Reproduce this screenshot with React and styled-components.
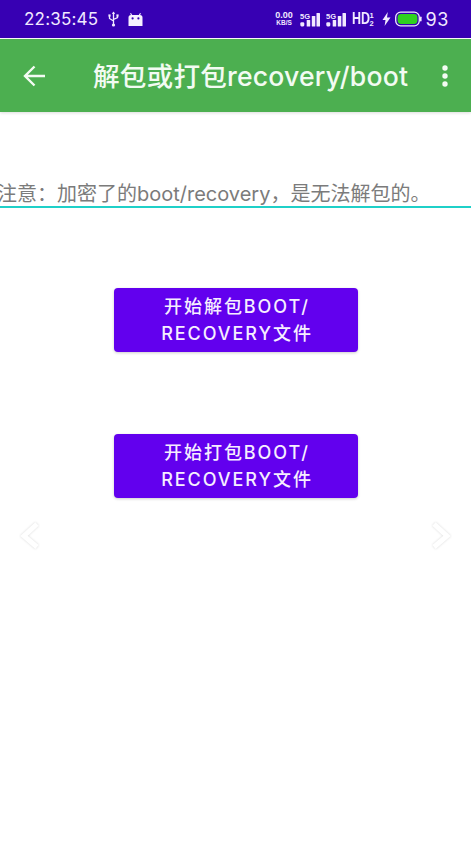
import React from "react";
import styled, { createGlobalStyle } from "styled-components";

const Global = createGlobalStyle`
  html, body { margin: 0; padding: 0; background: #fff; }
  body { font-family: Inter, "Noto Sans CJK SC", sans-serif; overflow: hidden; }
`;

const Page = styled.div`
  width: 471px;
  height: 864px;
  display: flex;
  flex-direction: column;
  overflow: hidden;
  background: #fff;
`;

const StatusBar = styled.div`
  height: 38px;
  flex: none;
  box-sizing: border-box;
  padding: 0 22px 0 24px;
  display: flex;
  align-items: center;
  justify-content: space-between;
  background: #3700b3;
  color: #f1e9ff;
`;

const StatusGroup = styled.div`
  display: flex;
  align-items: center;
  gap: ${(p) => p.$gap || 4}px;
`;

const Clock = styled.span`
  font-size: 17px;
  letter-spacing: 0.2px;
  margin-right: 1px;
`;

const Speed = styled.span`
  display: flex;
  flex-direction: column;
  align-items: center;
  font: 700 9px/7.5px "Liberation Sans", sans-serif;
  width: 19px;
`;

const Speed2 = styled.span`
  font-size: 6.5px;
`;

const HD = styled.span`
  font: 700 16px/1 "Liberation Sans", sans-serif;
  transform: scaleX(0.78);
  transform-origin: left center;
  width: 17px;
  margin-left: 2px;
`;

const Level = styled.span`
  font-size: 18px;
  letter-spacing: 0.6px;
`;

const AppBar = styled.header`
  height: 73px;
  flex: none;
  margin-top: 1px;
  display: flex;
  align-items: center;
  background: #4caf50;
  color: #f2fbf2;
  box-shadow: 0 1px 3px rgba(0, 0, 0, 0.14);
`;

const BackSlot = styled.div`
  flex: none;
  width: 93px;
  box-sizing: border-box;
  padding-left: 22px;
  display: flex;
  align-items: center;
`;

const MoreSlot = styled.div`
  flex: none;
  width: 62px;
  box-sizing: border-box;
  padding-left: 33px;
  display: flex;
  align-items: center;
`;

const Title = styled.h1`
  flex: 1;
  margin: 0 0 2px;
  font-size: 26.6px;
  font-weight: 500;
  letter-spacing: 0.2px;
  white-space: nowrap;
`;

const Body = styled.main`
  flex: 1;
  display: flex;
  flex-direction: column;
  position: relative;
`;

const Notice = styled.div`
  margin-top: 70px;
  height: 26px;
  box-sizing: border-box;
  border-bottom: 2.5px solid #1fd0c8;
  color: #7b7b7b;
  font-size: 20px;
  line-height: 24px;
  white-space: nowrap;
  overflow: hidden;
  text-indent: -3px;
`;

const Actions = styled.div`
  margin-top: 80px;
  display: flex;
  flex-direction: column;
  align-items: center;
  gap: 82px;
`;

const ActionButton = styled.button`
  width: 244px;
  height: 64px;
  padding: 0 0 0 3px;
  border: 0;
  border-radius: 4px;
  background: #6200ee;
  color: #f6eeff;
  font-family: Inter, "Noto Sans CJK SC", sans-serif;
  font-size: 18px;
  font-weight: 500;
  line-height: 27px;
  letter-spacing: 1.95px;
  box-shadow: 0 1px 3px rgba(0, 0, 0, 0.2);
`;

const Chevron = styled.svg`
  position: absolute;
  top: 409px;
  ${(p) => (p.$right ? "right: 20px;" : "left: 20px;")}
  width: 20px;
  height: 30px;
  filter: drop-shadow(0 0 1px rgba(0, 0, 0, 0.16));
`;

const SignalIcon = styled.svg`
  margin-left: 2px;
`;

const HalfIcon = styled.svg`
  margin-left: -4px;
`;

const BoltIcon = styled.svg`
  margin-left: 2px;
`;

const Usb = () => (
  <svg width="11" height="16" viewBox="0 0 11 16" fill="none" stroke="#f1e9ff" strokeWidth="1.3">
    <path d="M5.5 1v14M1.5 5v2.5L5.5 10M9.5 5v1.5L5.5 8.5" />
    <path d="M5.5 0.5l-1.6 2.4h3.2z" fill="#f1e9ff" stroke="none" />
    <rect x="0.4" y="3.4" width="2.2" height="2.2" fill="#f1e9ff" stroke="none" />
    <rect x="8.4" y="3.4" width="2.2" height="2.2" fill="#f1e9ff" stroke="none" />
    <circle cx="5.5" cy="14" r="1.6" fill="#f1e9ff" stroke="none" />
  </svg>
);

const Robot = () => (
  <svg width="15" height="13" viewBox="0 0 15 13">
    <path d="M0.5 13V4.5A2.5 2.5 0 0 1 3 2L2 0.4 3 0l1.2 2h6.6L12 0l1 .4L12 2a2.5 2.5 0 0 1 2.5 2.5V13z" fill="#f6f0ff" />
    <circle cx="4.6" cy="5.4" r="1.1" fill="#3700b3" />
    <circle cx="10.4" cy="5.4" r="1.1" fill="#3700b3" />
  </svg>
);

const Signal = () => (
  <SignalIcon width="20" height="15" viewBox="0 0 20 15" fill="#f1e9ff">
    <text x="0" y="6.5" fontSize="7.5" fontWeight="700" fontFamily="Liberation Sans">5G</text>
    <rect x="0.3" y="10.2" width="4" height="4.2" rx="1.3" />
    <rect x="6.7" y="8" width="3.5" height="6.4" rx="0.5" />
    <rect x="11.8" y="4" width="3.5" height="10.4" rx="0.5" />
    <rect x="16.5" y="1" width="3.5" height="13.4" rx="0.5" />
  </SignalIcon>
);

const HalfNote = () => (
  <HalfIcon width="7" height="16" viewBox="0 0 7 16" fill="#f1e9ff">
    <text x="0.5" y="7" fontSize="7.5" fontWeight="700" fontFamily="Liberation Sans">1</text>
    <text x="0.5" y="15" fontSize="7.5" fontWeight="700" fontFamily="Liberation Sans">2</text>
  </HalfIcon>
);

const Bolt = () => (
  <BoltIcon width="9" height="14" viewBox="0 0 9 14" fill="#f1e9ff">
    <path d="M5.8 0L0.5 8h3L2.6 14 8.5 5.5H5z" />
  </BoltIcon>
);

const Battery = () => (
  <svg width="27" height="16" viewBox="0 0 27 16">
    <rect x="0.7" y="1.2" width="23.6" height="13.6" rx="5" fill="none" stroke="#f1e9ff" strokeWidth="1.3" />
    <rect x="2.6" y="3" width="19.8" height="10" rx="3.4" fill="#2fd11f" />
    <rect x="25" y="5.5" width="1.6" height="5" rx="0.8" fill="#f1e9ff" />
  </svg>
);

const ArrowBack = () => (
  <svg width="24" height="24" viewBox="0 0 24 24" fill="none" stroke="#f3fbf3" strokeWidth="2.4">
    <path d="M23 12H3M12.5 2.5L3 12l9.5 9.5" />
  </svg>
);

const MoreDots = () => (
  <svg width="6" height="22" viewBox="0 0 6 22" fill="#f3fbf3">
    <circle cx="3" cy="3" r="2.7" />
    <circle cx="3" cy="11" r="2.7" />
    <circle cx="3" cy="19" r="2.7" />
  </svg>
);

const notice = "注意\uFF1A加密了的boot/recovery\uFF0C是无法解包的。";

export default function App() {
  return (
    <Page>
      <Global />
      <StatusBar>
        <StatusGroup $gap={9}>
          <Clock>22:35:45</Clock>
          <Usb />
          <Robot />
        </StatusGroup>
        <StatusGroup $gap={4}>
          <Speed>
            0.00
            <Speed2>KB/S</Speed2>
          </Speed>
          <Signal />
          <Signal />
          <HD>HD</HD>
          <HalfNote />
          <Bolt />
          <Battery />
          <Level>93</Level>
        </StatusGroup>
      </StatusBar>
      <AppBar>
        <BackSlot>
          <ArrowBack />
        </BackSlot>
        <Title>解包或打包recovery/boot</Title>
        <MoreSlot>
          <MoreDots />
        </MoreSlot>
      </AppBar>
      <Body>
        <Notice>{notice}</Notice>
        <Actions>
          <ActionButton>
            开始解包BOOT/
            <br />
            RECOVERY文件
          </ActionButton>
          <ActionButton>
            开始打包BOOT/
            <br />
            RECOVERY文件
          </ActionButton>
        </Actions>
        <Chevron viewBox="0 0 20 30" fill="none" stroke="#fff" strokeWidth="5">
          <path d="M17 3L4 15l13 11" />
        </Chevron>
        <Chevron $right viewBox="0 0 20 30" fill="none" stroke="#fff" strokeWidth="5">
          <path d="M3 3l13 12L3 26" />
        </Chevron>
      </Body>
    </Page>
  );
}
